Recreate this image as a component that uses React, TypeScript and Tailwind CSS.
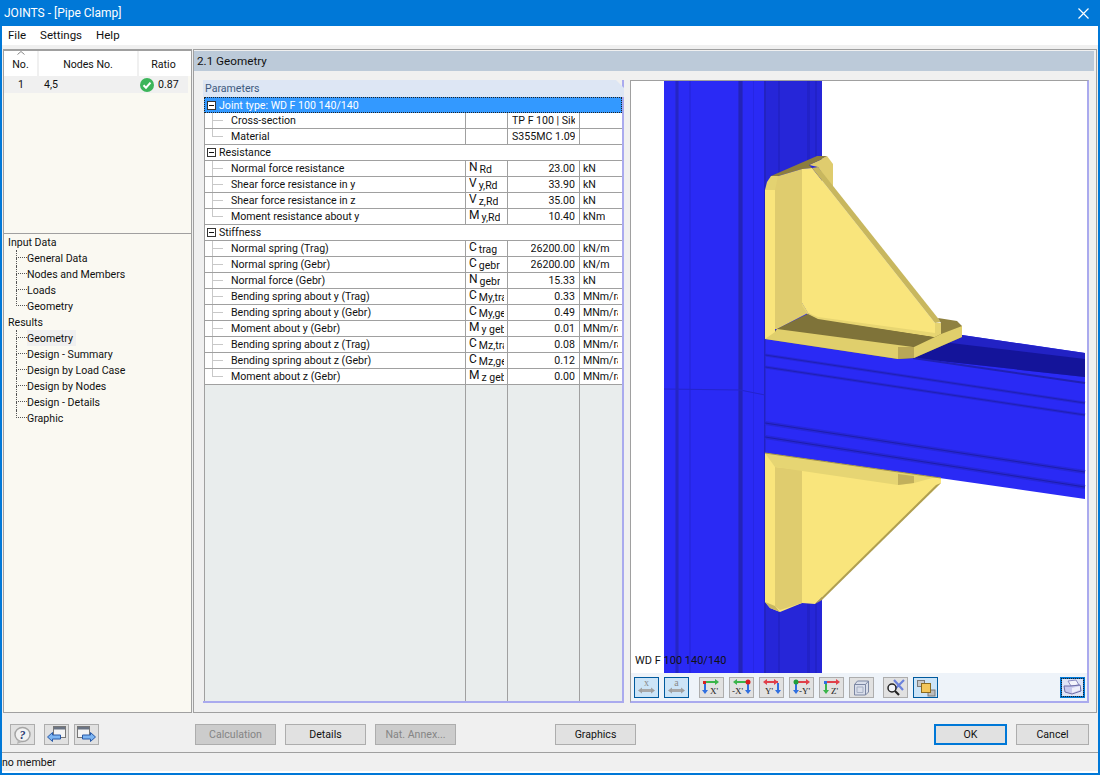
import type { ReactNode } from 'react';

const font = "font-['Roboto','Liberation_Sans',Arial,sans-serif]";

type Row =
  | { kind: 'section'; label: string; selected?: boolean }
  | { kind: 'row'; label: string; sym?: string; sub?: string; value: string; unit?: string; left?: boolean; last?: boolean };

const rows: Row[] = [
  { kind: 'section', label: 'Joint type: WD F 100 140/140', selected: true },
  { kind: 'row', label: 'Cross-section', value: 'TP F 100 | Sika', left: true },
  { kind: 'row', label: 'Material', value: 'S355MC 1.0976', left: true, last: true },
  { kind: 'section', label: 'Resistance' },
  { kind: 'row', label: 'Normal force resistance', sym: 'N', sub: 'Rd', value: '23.00', unit: 'kN' },
  { kind: 'row', label: 'Shear force resistance in y', sym: 'V', sub: 'y,Rd', value: '33.90', unit: 'kN' },
  { kind: 'row', label: 'Shear force resistance in z', sym: 'V', sub: 'z,Rd', value: '35.00', unit: 'kN' },
  { kind: 'row', label: 'Moment resistance about y', sym: 'M', sub: 'y,Rd', value: '10.40', unit: 'kNm', last: true },
  { kind: 'section', label: 'Stiffness' },
  { kind: 'row', label: 'Normal spring (Trag)', sym: 'C', sub: 'trag', value: '26200.00', unit: 'kN/m' },
  { kind: 'row', label: 'Normal spring (Gebr)', sym: 'C', sub: 'gebr', value: '26200.00', unit: 'kN/m' },
  { kind: 'row', label: 'Normal force (Gebr)', sym: 'N', sub: 'gebr', value: '15.33', unit: 'kN' },
  { kind: 'row', label: 'Bending spring about y (Trag)', sym: 'C', sub: 'My,trag', value: '0.33', unit: 'MNm/rad' },
  { kind: 'row', label: 'Bending spring about y (Gebr)', sym: 'C', sub: 'My,gebr', value: '0.49', unit: 'MNm/rad' },
  { kind: 'row', label: 'Moment about y (Gebr)', sym: 'M', sub: 'y gebr', value: '0.01', unit: 'MNm/rad' },
  { kind: 'row', label: 'Bending spring about z (Trag)', sym: 'C', sub: 'Mz,trag', value: '0.08', unit: 'MNm/rad' },
  { kind: 'row', label: 'Bending spring about z (Gebr)', sym: 'C', sub: 'Mz,gebr', value: '0.12', unit: 'MNm/rad' },
  { kind: 'row', label: 'Moment about z (Gebr)', sym: 'M', sub: 'z gebr', value: '0.00', unit: 'MNm/rad', last: true },
];

const treeInput = ['General Data', 'Nodes and Members', 'Loads', 'Geometry'];
const treeResults = ['Geometry', 'Design - Summary', 'Design by Load Case', 'Design by Nodes', 'Design - Details', 'Graphic'];

function MinusBox() {
  return (
    <span className="flex h-[9px] w-[9px] shrink-0 items-center justify-center border border-[#333] bg-white">
      <span className="h-px w-[5px] bg-[#111]" />
    </span>
  );
}

function TreeBranch({ last, dotted }: { last?: boolean; dotted?: boolean }) {
  const color = dotted ? 'border-dotted border-[#555]' : 'border-solid border-[#c8c8c8]';
  return (
    <span className="flex h-full w-[11px] shrink-0 flex-col">
      <span className={`h-[8px] border-b border-l ${color}`} />
      {!last && <span className={`h-[8px] border-l ${color}`} />}
    </span>
  );
}

function TableRow({ row }: { row: Row }) {
  if (row.kind === 'section') {
    return (
      <div
        className={`flex h-4 items-center gap-[3px] pl-[2px] ${
          row.selected ? 'border border-dotted border-[#222] bg-[#3399ff] text-white' : 'border-b border-l border-[#a0a0a0] bg-white'
        }`}
      >
        <MinusBox />
        <span className="pt-[2px]">{row.label}</span>
      </div>
    );
  }
  return (
    <div className="flex h-4 border-b border-l border-[#a0a0a0] bg-white">
      <div className="flex w-[261px] shrink-0 items-center border-r border-[#a0a0a0]">
        <span className="ml-[7px] flex h-full"><TreeBranch last={row.last} /></span>
        <span className="ml-[8px] whitespace-nowrap pt-[2px]">{row.label}</span>
      </div>
      <div className="flex w-[42px] shrink-0 items-center overflow-hidden border-r border-[#a0a0a0] pl-[3px] pr-[3px]">
        {row.sym && (
          <span className="overflow-hidden whitespace-nowrap text-[12px]">
            {row.sym}
            <span className="ml-[2px] align-[-2px] text-[10.5px]">{row.sub}</span>
          </span>
        )}
      </div>
      <div className={`flex w-[72px] shrink-0 items-center border-r border-[#a0a0a0] px-1 ${row.left ? 'justify-start' : 'justify-end'}`}>
        <span className="overflow-hidden whitespace-nowrap pt-[2px]">{row.value}</span>
      </div>
      <div className="flex w-[42px] shrink-0 items-center pl-[3px] pr-[4px]">
        <span className="overflow-hidden whitespace-nowrap pt-[2px]">{row.unit}</span>
      </div>
    </div>
  );
}

function ToolBtn({ active, focus, children }: { active?: boolean; focus?: boolean; children: ReactNode }) {
  const look = focus
    ? 'border-2 border-[#0078d7] bg-[#dfe3f5]'
    : active
      ? 'border border-[#005a9e] bg-[#cce4f7]'
      : 'border border-[#adadad] bg-[#e1e1e1]';
  return <div className={`flex h-[21px] w-[25px] shrink-0 items-center justify-center ${look}`}>{children}</div>;
}

function Button({ label, disabled, primary, className = '' }: { label: string; disabled?: boolean; primary?: boolean; className?: string }) {
  const look = disabled
    ? 'border border-[#adadad] bg-[#cccccc] text-[#858585]'
    : primary
      ? 'border-2 border-[#0078d7] bg-[#e1e1e1] text-[#111]'
      : 'border border-[#adadad] bg-[#e1e1e1] text-[#111]';
  return <div className={`flex h-[21px] items-center justify-center pt-[2px] ${look} ${className}`}>{label}</div>;
}

function DimIcon({ letter }: { letter: string }) {
  return (
    <svg width="19" height="17" viewBox="0 0 19 17">
      <text x="9.5" y="7" textAnchor="middle" fontFamily="Liberation Serif, serif" fontSize="10" fill="#8a8a8a">{letter}</text>
      <path d="M3 11.5h13" stroke="#a8a8a8" strokeWidth="3" />
      <path d="M1 11.5l4-3v6zM18 11.5l-4-3v6z" fill="#a0a0a0" />
    </svg>
  );
}

function Arrow({ d, tip, color }: { d: string; tip: string; color: string }) {
  return (
    <>
      <path d={d} stroke={color} strokeWidth="2" fill="none" />
      <path d={tip} fill={color} />
    </>
  );
}

const right = (y: number, a: number, b: number, c: string) => <Arrow d={`M${a} ${y}H${b}`} tip={`M${b + 3} ${y}l-4-3v6z`} color={c} />;
const left = (y: number, a: number, b: number, c: string) => <Arrow d={`M${a} ${y}H${b}`} tip={`M${b - 3} ${y}l4-3v6z`} color={c} />;
const down = (x: number, a: number, b: number, c: string) => <Arrow d={`M${x} ${a}V${b}`} tip={`M${x} ${b + 3}l-3-4h6z`} color={c} />;

function AxisIcon({ kind }: { kind: 'x' | '-x' | 'y' | '-y' | 'z' }) {
  const labelFont = { fontFamily: 'Liberation Serif, serif', fontSize: 9, fill: '#222' };
  return (
    <svg width="23" height="19" viewBox="0 0 23 19">
      {kind === 'x' && (
        <>
          {right(4, 5, 16, '#3bb54a')}
          {down(5, 4, 13, '#2f6fe0')}
          <rect x="3" y="3" width="3" height="3" fill="#d81e1e" />
          <text x="10" y="16" {...labelFont}>X'</text>
        </>
      )}
      {kind === '-x' && (
        <>
          {left(4, 18, 6, '#3bb54a')}
          {down(18, 4, 13, '#2f6fe0')}
          <circle cx="18" cy="4" r="2.5" fill="#d81e1e" />
          <text x="2" y="16" {...labelFont}>-X'</text>
        </>
      )}
      {kind === 'y' && (
        <>
          {left(4, 18, 6, '#e0404a')}
          {right(4, 10, 15, '#e0404a')}
          {down(18, 5, 13, '#2f6fe0')}
          <text x="5" y="16" {...labelFont}>Y'</text>
        </>
      )}
      {kind === '-y' && (
        <>
          {right(4, 6, 17, '#e0404a')}
          {down(6, 5, 13, '#2f6fe0')}
          <circle cx="6" cy="4" r="2.5" fill="#1f9e3a" />
          <text x="9" y="16" {...labelFont}>-Y'</text>
        </>
      )}
      {kind === 'z' && (
        <>
          {right(4, 6, 17, '#e0404a')}
          {down(6, 5, 13, '#3bb54a')}
          <rect x="4" y="3" width="3" height="3" fill="#2f6fe0" />
          <text x="11" y="16" {...labelFont}>Z'</text>
        </>
      )}
    </svg>
  );
}

function BoxIcon() {
  return (
    <svg width="19" height="17" viewBox="0 0 19 17" fill="none" stroke="#7c87a3">
      <path d="M2.5 5.5l3-3.5h11v11l-3 3h-11z" fill="#d9deea" />
      <path d="M2.5 5.5h11v10.5M13.5 5.5l3-3.5" />
      <path d="M5 8h6v5.5H5z" stroke="#a6afc4" />
    </svg>
  );
}

function ZoomIcon() {
  return (
    <svg width="21" height="18" viewBox="0 0 21 18">
      <path d="M9 1l9 10M19 1l-10 10" stroke="#6b82dc" strokeWidth="2.2" />
      <circle cx="7" cy="9" r="4" fill="#f2f4f8" stroke="#222" strokeWidth="1.5" />
      <path d="M10 12l4 4" stroke="#222" strokeWidth="2.2" />
    </svg>
  );
}

function LayersIcon() {
  return (
    <svg width="20" height="18" viewBox="0 0 20 18">
      <rect x="1.5" y="1.5" width="7" height="6" fill="#c8c8c8" stroke="#7a7a7a" />
      <rect x="12" y="11" width="7" height="6" fill="#bdbdbd" stroke="#7a7a7a" />
      <rect x="5.5" y="4.5" width="9" height="9" fill="#f3c65a" stroke="#8a6a20" />
    </svg>
  );
}

function PrintIcon() {
  return (
    <svg width="21" height="17" viewBox="0 0 21 17" className="outline outline-1 outline-dotted outline-[#222]">
      <path d="M6 2l8-1 3 5-8 1z" fill="#f4f4fb" stroke="#8a8ac0" />
      <path d="M2 7l7 0 9-1 1 6-9 3-7-2z" fill="#c9c9ec" stroke="#6d6da8" />
      <path d="M10 9l8-2v4l-8 3z" fill="#eeeefa" />
    </svg>
  );
}

function HelpIcon() {
  return (
    <svg width="19" height="18" viewBox="0 0 19 18">
      <ellipse cx="9.5" cy="8.5" rx="7.5" ry="7" fill="#f2f2f2" stroke="#a5a5a5" strokeWidth="1.5" />
      <path d="M5 14l-1 4 5-2z" fill="#b5b5b5" />
      <text x="9.5" y="13" textAnchor="middle" fontFamily="Liberation Serif, serif" fontStyle="italic" fontWeight="700" fontSize="12" fill="#2a3a72">?</text>
    </svg>
  );
}

function WindowArrow({ dir }: { dir: 'left' | 'right' }) {
  return (
    <svg width="21" height="18" viewBox="0 0 21 18">
      <rect x={dir === 'left' ? 7.5 : 1.5} y="0.5" width="12" height="11" fill="#f4f4f4" stroke="#777" />
      <rect x={dir === 'left' ? 8 : 2} y="1" width="11" height="2.5" fill="#6b7484" />
      {dir === 'left' ? (
        <path d="M1.5 11l5-4.500v2.500h8v4h-8v2.500z" fill="#7db5f2" stroke="#2a5aa8" />
      ) : (
        <path d="M19.5 11l-5-4.500v2.500h-8v4h8v2.500z" fill="#7db5f2" stroke="#2a5aa8" />
      )}
    </svg>
  );
}

function JointDrawing() {
  const base = '#2a2af5';
  return (
    <svg viewBox="631 81 456 592" className="block h-[592px] w-[456px] shrink-0 bg-white">
      {/* column */}
      <rect x="664" y="81" width="158" height="592" fill={base} />
      <rect x="675" y="81" width="4" height="592" fill="#2828d8" />
      <rect x="676" y="81" width="2" height="592" fill="#2525c4" />
      <rect x="689" y="81" width="2" height="592" fill="#2626e4" />
      <rect x="738" y="81" width="5" height="592" fill="#2626d0" />
      <rect x="739" y="81" width="3" height="592" fill="#2323b8" />
      <rect x="753" y="81" width="1" height="592" fill="#2626e4" />
      <rect x="765" y="81" width="57" height="592" fill="#2626d8" />
      <rect x="764" y="81" width="2" height="592" fill="#2323c0" />
      <rect x="778" y="81" width="2" height="592" fill="#2222c8" />
      <rect x="807" y="81" width="3" height="592" fill="#2222c8" />
      <rect x="815" y="81" width="2" height="592" fill="#2222c8" />
      <path d="M664 389L740 390L765 395" stroke="#2424cc" fill="none" />

      {/* beam */}
      <path d="M765 306L1085 353V499L765 453Z" fill={base} />
      <path d="M765 339V453" stroke="#2323c0" />
      <path d="M900 333L962 335L1085 353V377L913 358Z" fill="#2222c4" />
      <path d="M900 337L1085 359V377L913 358Z" fill="#14149a" />
      <path d="M765 355L1085 403" stroke="#2626d8" strokeWidth="3" />
      <path d="M765 355L1085 403" stroke="#2020b4" />
      <path d="M765 367L1085 415" stroke="#2626d8" strokeWidth="3" />
      <path d="M765 367L1085 415" stroke="#2020b4" />
      <path d="M913 358L1085 383" stroke="#2020b4" strokeWidth="2" />
      <path d="M765 423L1085 472" stroke="#2626d8" strokeWidth="4" />
      <path d="M765 423L1085 472" stroke="#1e1eac" />
      <path d="M765 437L1085 487" stroke="#2626d8" strokeWidth="4" />
      <path d="M765 437L1085 487" stroke="#1e1eac" />

      {/* upper stiffener */}
      <path d="M765 339L777 329L808 314L818 319L935 323L962 326V337L914 358L898 359Z" fill="#7f7339" />
      <path d="M809 165L820 160L827 156L833 164V190L818 167Z" fill="#dfcc6e" />
      <path d="M771 176L817 156H827L820 160L809 165L812 168L802 169L778 176Z" fill="#8c7d3e" />
      <path d="M765 190H775V339H765Z" fill="#f9e57c" />
      <path d="M775 177L802 169V303L808 313L777 329H775Z" fill="#dfcc6e" />
      <path d="M771 176L778 176L775 190H765L767 182Z" fill="#e3d271" />
      <path d="M802 169L812 168L935 323V337L818 319L808 313L802 303Z" fill="#f9e57c" />
      <path d="M802 303L808 313L818 317L935 333V337L818 320L808 315L802 306Z" fill="#e8d672" />
      <path d="M812 168L818 167L941 322L935 323Z" fill="#c8b75e" />
      <path d="M938 318L957 321L962 326L941 334V323Z" fill="#8f8140" />
      <path d="M935 323H941V334L935 337Z" fill="#e5d371" />
      <path d="M777 329L808 314L818 319L933 337L913 347Z" fill="#7f7339" />
      <path d="M765 339L775 332L777 329L913 347H898V359Z" fill="#e0cf6c" />
      <path d="M898 347H914V358L898 359Z" fill="#b9a757" />
      <path d="M914 347L935 337L941 334L962 326V337L914 358Z" fill="#e0cf6c" />

      {/* lower stiffener */}
      <path d="M765 453L941 478V483L815 604L802 603L780 612L770 608L765 602Z" fill="#f9e57c" />
      <path d="M775 467L802 470V603L780 610L775 606Z" fill="#dfcc6e" />
      <path d="M765 453L941 478L936 477L914 483L898 485L775 467Z" fill="#e6d573" />
      <path d="M898 474L914 476V483L898 485Z" fill="#c2b05c" />
      <path d="M936 485L941 483L822 600L815 604Z" fill="#b09f50" />
      <path d="M765 602L775 606L780 612L770 608Z" fill="#c9b862" />
      <path d="M765 453L941 478" stroke="#a39347" fill="none" />
    </svg>
  );
}

export default function App() {
  return (
    <div className={`flex h-[775px] w-[1100px] flex-col overflow-hidden border-x-2 border-b-2 border-[#0078d7] bg-[#f0f0f0] text-[10.6px] leading-none text-[#111] ${font}`}>
      {/* title bar */}
      <div className="flex h-[26px] shrink-0 items-center justify-between bg-[#0078d7] pl-[2px] pr-[9px] text-[12px] text-white">
        <span>JOINTS - [Pipe Clamp]</span>
        <svg width="11" height="11" viewBox="0 0 11 11" stroke="white" strokeWidth="1.2"><path d="M0.5 0.5l10 10M10.5 0.5l-10 10" /></svg>
      </div>

      {/* menu */}
      <div className="flex h-[19px] shrink-0 items-center gap-[14px] bg-white pl-[6px] text-[11.5px]">
        <span>File</span>
        <span>Settings</span>
        <span>Help</span>
      </div>

      {/* main */}
      <div className="flex h-[668px] shrink-0 pt-1">
        {/* left navigator */}
        <div className="ml-px flex w-[189px] shrink-0 flex-col border border-t-2 border-[#a0a0a0] bg-[#faf9f2]">
          <div className="h-[183px] shrink-0 border-b border-[#a0a0a0]">
            <div className="flex h-[25px] bg-white pr-[3px]">
              <div className="relative flex w-[35px] items-end justify-center border-r-2 border-[#f0f0f0] pb-[5px]">
                <svg width="8" height="4" viewBox="0 0 8 4" className="absolute left-[13px] top-0" fill="none" stroke="#888"><path d="M0.5 3.5l3.5-3 3.5 3" /></svg>
                <span>No.</span>
              </div>
              <div className="flex w-[100px] items-end justify-center border-r-2 border-[#f0f0f0] pb-[5px]">Nodes No.</div>
              <div className="flex flex-1 items-end justify-center pb-[5px]">Ratio</div>
            </div>
            <div className="mr-[3px] flex h-[17px] items-center bg-[#f0f0f0]">
              <span className="w-[35px] pr-[1px] pt-[2px] text-center">1</span>
              <span className="w-[100px] pl-[5px] pt-[2px]">4,5</span>
              <span className="flex flex-1 items-center pl-[1px]">
                <svg width="14" height="14" viewBox="0 0 14 14">
                  <circle cx="7" cy="7" r="7" fill="#3cb55a" />
                  <path d="M3.5 7.2l2.5 2.5 4.5-5" stroke="white" strokeWidth="2" fill="none" />
                </svg>
                <span className="ml-[4px] pt-[2px]">0.87</span>
              </span>
            </div>
          </div>
          <div className="pl-[4px]">
            <div className="flex h-4 items-center pt-[2px]">Input Data</div>
            {treeInput.map((t, i) => (
              <div key={t} className="flex h-4 items-center pl-[8px]">
                <TreeBranch dotted last={i === treeInput.length - 1} />
                <span className="pt-[2px]">{t}</span>
              </div>
            ))}
            <div className="flex h-4 items-center pt-[2px]">Results</div>
            {treeResults.map((t, i) => (
              <div key={t} className="flex h-4 items-center pl-[8px]">
                <TreeBranch dotted last={i === treeResults.length - 1} />
                <span className={`flex h-full items-center pr-[3px] pt-[2px] ${i === 0 ? 'bg-[#f0f0f0]' : ''}`}>{t}</span>
              </div>
            ))}
          </div>
        </div>

        {/* right group */}
        <div className="ml-px flex h-[664px] w-[904px] shrink-0 flex-col border border-[#a0a0a0]">
          <div className="mr-[2px] mt-px flex h-5 shrink-0 items-center bg-[#bccad9] pl-[3px] pt-[2px] text-[11.7px]">2.1 Geometry</div>
          <div className="mt-[9px] flex gap-[6px] pl-[9px]">
            {/* parameters */}
            <div className="flex h-[623px] w-[421px] shrink-0 flex-col border-b-2 border-r-2 border-[#aaaaee]">
              <div className="mr-[-2px] flex h-[17px] shrink-0 items-center bg-[#dde6f4] pl-[2px] pt-[2px] text-[#3d5a80] [clip-path:polygon(0_0,calc(100%-8px)_0,100%_8px,100%_100%,0_100%)]">Parameters</div>
              <div className="flex flex-1 flex-col pl-px">
                {rows.map(r => <TableRow key={r.label} row={r} />)}
                <div className="flex flex-1 border-l border-[#a0a0a0] bg-[#e9eded]">
                  <div className="w-[261px] border-r border-[#a0a0a0]" />
                  <div className="w-[42px] border-r border-[#a0a0a0]" />
                  <div className="w-[72px] border-r border-[#a0a0a0]" />
                </div>
              </div>
            </div>

            {/* viewer */}
            <div className="flex h-[623px] w-[459px] shrink-0 flex-col border-b-2 border-l border-r-2 border-t border-b-[#aaaaee] border-l-[#a0a0a0] border-r-[#aaaaee] border-t-[#a0a0a0]">
              <div className="relative">
                <JointDrawing />
                <span className="absolute bottom-[7px] left-[4px] text-[11px]">WD F 100 140/140</span>
              </div>
              <div className="flex flex-1 items-start bg-[#eef3f9] pl-[3px] pt-[4px]">
                <div className="flex gap-[5px]">
                  <ToolBtn active><DimIcon letter="x" /></ToolBtn>
                  <ToolBtn active><DimIcon letter="a" /></ToolBtn>
                </div>
                <div className="ml-[10px] flex gap-[5px]">
                  <ToolBtn><AxisIcon kind="x" /></ToolBtn>
                  <ToolBtn><AxisIcon kind="-x" /></ToolBtn>
                  <ToolBtn><AxisIcon kind="y" /></ToolBtn>
                  <ToolBtn><AxisIcon kind="-y" /></ToolBtn>
                  <ToolBtn><AxisIcon kind="z" /></ToolBtn>
                  <ToolBtn><BoxIcon /></ToolBtn>
                </div>
                <div className="ml-[9px] flex gap-[5px]">
                  <ToolBtn><ZoomIcon /></ToolBtn>
                  <ToolBtn active><LayersIcon /></ToolBtn>
                </div>
                <div className="ml-auto mr-[2px]">
                  <ToolBtn focus><PrintIcon /></ToolBtn>
                </div>
              </div>
            </div>
          </div>
        </div>
      </div>

      {/* buttons */}
      <div className="flex h-[39px] shrink-0 pl-[8px] pt-[11px]">
        <ToolBtn><HelpIcon /></ToolBtn>
        <div className="ml-[9px] flex gap-[5px]">
          <ToolBtn><WindowArrow dir="left" /></ToolBtn>
          <ToolBtn><WindowArrow dir="right" /></ToolBtn>
        </div>
        <Button label="Calculation" disabled className="ml-[96px] w-[81px]" />
        <Button label="Details" className="ml-[9px] w-[81px]" />
        <Button label="Nat. Annex..." disabled className="ml-[9px] w-[81px]" />
        <Button label="Graphics" className="ml-[99px] w-[81px]" />
        <Button label="OK" primary className="ml-[298px] w-[73px]" />
        <Button label="Cancel" className="ml-[9px] w-[73px]" />
      </div>

      {/* status */}
      <div className="flex h-[21px] shrink-0 items-center border-b-2 border-t border-b-white border-t-[#a0a0a0] pt-[2px]">no member</div>
    </div>
  );
}
